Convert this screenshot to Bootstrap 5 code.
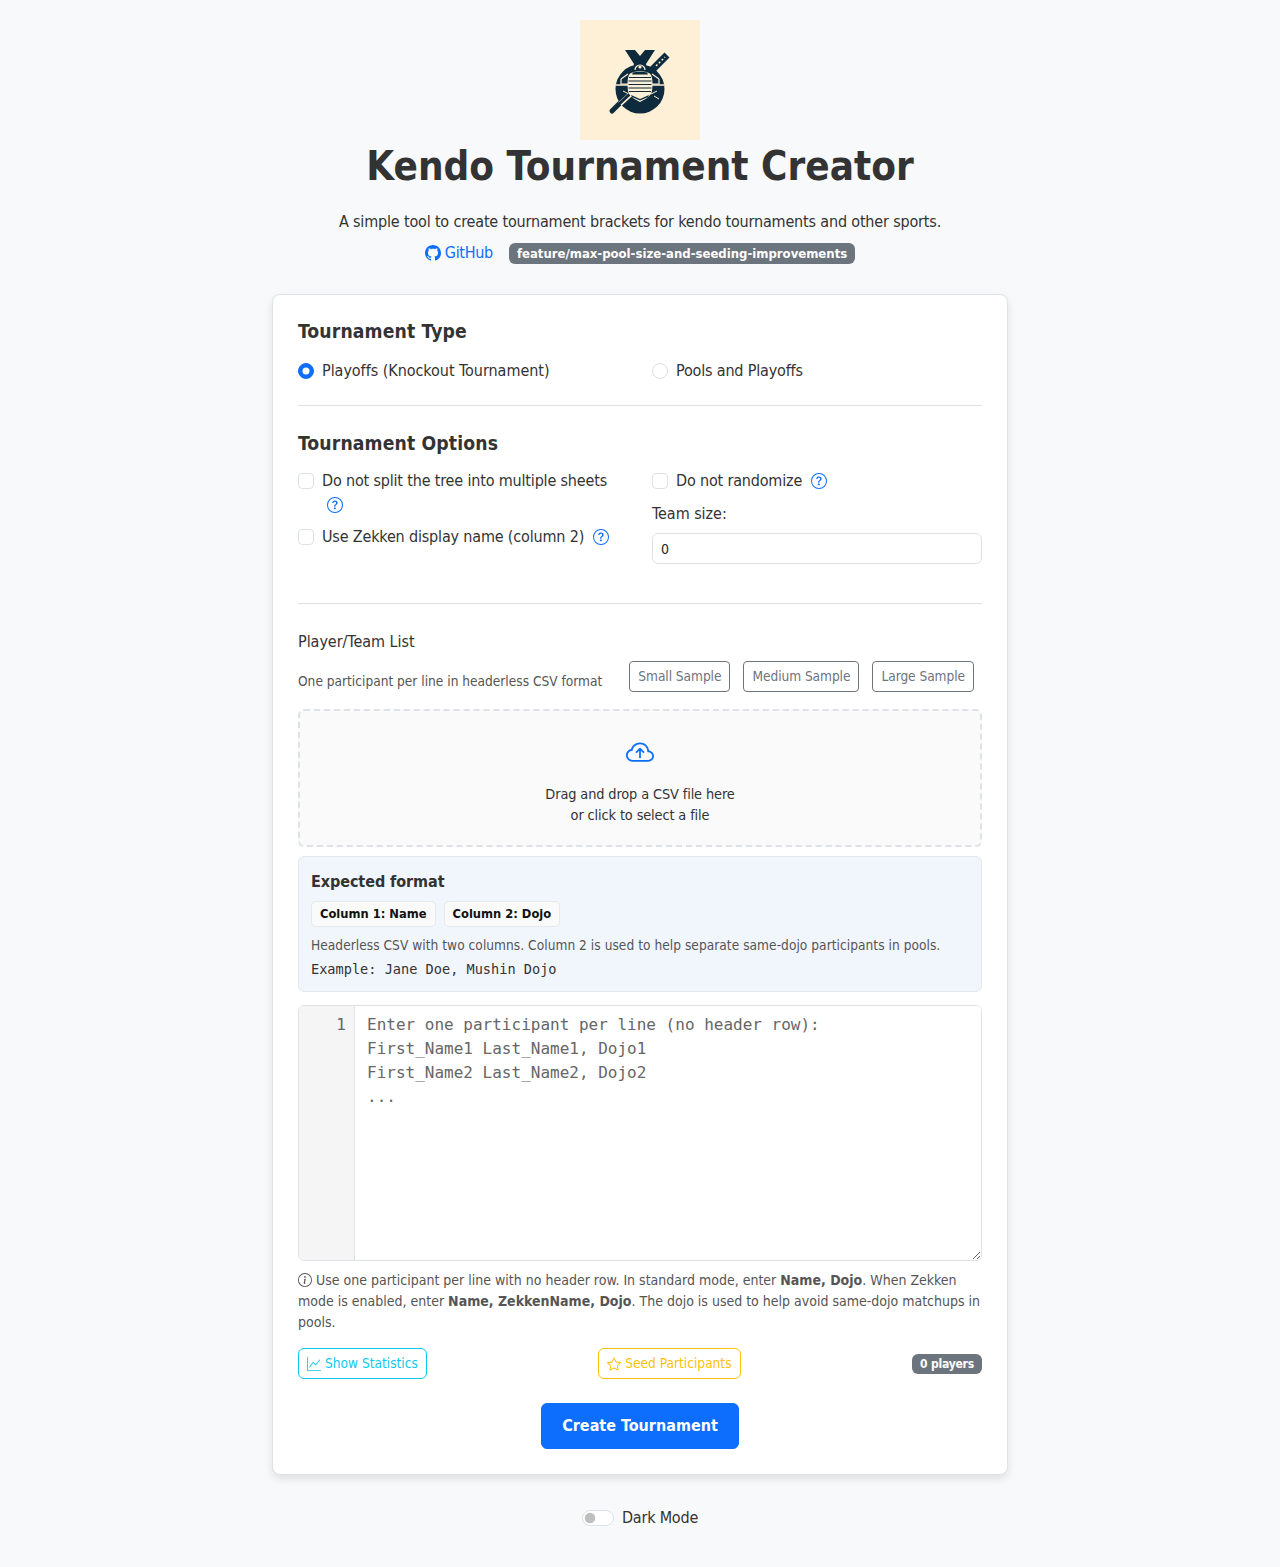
<!DOCTYPE html>
<html lang="en">
<head>
    <meta charset="UTF-8">
    <meta name="viewport" content="width=device-width, initial-scale=1.0">
    <title>Kendo Tournament Creator</title>
    <link href="https://cdn.jsdelivr.net/npm/bootstrap@5.3.0/dist/css/bootstrap.min.css" rel="stylesheet">
    <style>
        body { font-family: "DejaVu Sans Condensed", "DejaVu Sans", sans-serif; background-color: #f8f9fa; color: #333; }
        .ls-tight { letter-spacing: -.17px; }
        .ls-soft { letter-spacing: -.04px; }
        .page-wrap { width: 736px; margin: 0 auto; padding-top: 20px; }
        .logo-box { width: 120px; height: 120px; background: #fef0d6; display: block; margin: 0 auto; }
        .app-title { font-size: 40px; font-weight: 700; line-height: 48px; margin: 2px 0 20px; text-align: center; }
        .app-sub { text-align: center; line-height: 24px; margin-bottom: 6px; }
        .links-row { height: 26px; margin-bottom: 28px; }
        .git-link { text-decoration: none; color: #0d6efd; letter-spacing: -.3px; }
        .branch-tag { font-size: 13px; background: #6c757d; padding: 4px 8px; }
        .main-panel { background: #fff; border: 1px solid #dee2e6; border-radius: 8px; box-shadow: 0 4px 8px rgba(0,0,0,.1); padding: 25px; }
        .sec-title { font-size: 19.2px; font-weight: 700; line-height: 24px; margin-bottom: 15px; letter-spacing: .13px; }
        .options-title { margin-bottom: 13px; }
        .sep { margin: 22px 0 26px; border-color: #dee2e6; opacity: 1; }
        .sep-list { margin: 39px 0 26px; border-color: #dee2e6; opacity: 1; }
        .help-ic { color: #0d6efd; margin-left: 4px; vertical-align: -3px; }
        .wrap-ic { margin-left: 5px; }
        .team-label { margin-top: 1px; margin-bottom: 7px; }
        .team-input { height: 31px; font-size: 14px; padding: 4px 8px; }
        .list-title { line-height: 24px; margin-bottom: 7px; }
        .sample-hint { font-size: 13.6px; line-height: 21px; color: #555; }
        .sample-row { margin-bottom: 17px; }
        .sample-btn { font-size: 13.6px; height: 31px; letter-spacing: -.05px; }
        .drop-area { height: 138px; background: #fafafa; border: 2px dashed #dee2e6; border-radius: 6px; font-size: 14.4px; letter-spacing: -.12px; text-align: center; padding-top: 28px; line-height: 21px; }
        .drop-area svg { color: #0d6efd; display: block; margin: 0 auto 17px; }
        .format-box { background: #f1f6fd; border: 1px solid #e3e8ee; border-radius: 6px; padding: 13px 12px; height: 136px; margin-top: 9px; }
        .format-title { font-size: 16px; font-weight: 700; line-height: 24px; margin-bottom: 7px; letter-spacing: -.07px; }
        .col-chip { background: #fafafa; border: 1px solid #e6e8ea; border-radius: 5px; font-size: 12.8px; font-weight: 700; color: #111; padding: 4px 8px; line-height: 16px; }
        .format-note { font-size: 13.6px; color: #555; line-height: 20px; margin: 8px 0 4px; letter-spacing: .04px; }
        .format-eg { font-family: "DejaVu Sans Mono", monospace; font-size: 13.6px; color: #333; line-height: 20px; }
        .editor-box { height: 256px; margin-top: 13px; border: 1px solid #dee2e6; border-radius: 6px; overflow: hidden; }
        .line-gutter { width: 56px; background: #f5f5f5; border-right: 1px solid #dee2e6; text-align: right; padding: 7px 8px 0 0; font-family: "DejaVu Sans Mono", monospace; line-height: 24px; color: #666; }
        .list-input { font-family: "DejaVu Sans Mono", monospace; line-height: 24px; border: 0; padding: 7px 12px; flex: 1; outline: 0; resize: vertical; }
        .list-input::placeholder { color: #666; }
        .help-text { font-size: 14px; color: #555; line-height: 21px; margin: 9px 0 15px; }
        .help-text svg { vertical-align: -2px; }
        .tool-btn { font-size: 13.6px; height: 31px; padding: 4px 8px; }
        .count-tag { font-size: 12px; padding: 4px 8px; background: #6c757d; letter-spacing: -.2px; }
        .create-btn { width: 198px; height: 46px; font-weight: 700; margin: 24px auto 0; display: block; }
        .theme-row { margin-top: 31px; height: 24px; letter-spacing: -.2px; }
    </style>
</head>
<body>
    <div class="page-wrap">
        <svg class="logo-box" viewBox="0 0 120 120" role="img" aria-label="Kendo logo">
            <!-- sword behind the armour -->
            <path d="M32 91 52 71" stroke="#0e2a3d" stroke-width="5" stroke-linecap="round"/>
            <path d="M72 50 87 35" stroke="#0e2a3d" stroke-width="7"/>
            <path d="M76 46 85 37" stroke="#fef0d6" stroke-width="1.5" stroke-dasharray="2 2"/>
            <!-- round body -->
            <circle cx="60" cy="69" r="24.500" fill="#0e2a3d"/>
            <!-- helmet knot and horns -->
            <path d="M45 30h10l5 6 5-6h10l-9 14-1 5h-10l-1-5z" fill="#0e2a3d"/>
            <circle cx="60" cy="47" r="6.500" fill="#0e2a3d"/>
            <path d="M55 50a5 5 0 0 1 10 0" fill="none" stroke="#fef0d6" stroke-width="1.200"/>
            <circle cx="60" cy="47" r="1.600" fill="#fef0d6"/>
            <!-- shoulder and skirt lines -->
            <path d="M41 59l7-5M79 59l-7-5" stroke="#fef0d6" stroke-width="1.200"/>
            <path d="M41 59v5h7M79 59v5h-7" fill="none" stroke="#fef0d6" stroke-width="1.200"/>
            <path d="M36 65h13M71 65h13" stroke="#fef0d6" stroke-width="1.300"/>
            <path d="M43 71l6 3M77 71l-6 3M74 76l5 3" stroke="#fef0d6" stroke-width="1"/>
            <!-- handle runs over the disc -->
            <path d="M40 84 53 72" stroke="#fef0d6" stroke-width="5"/>
            <path d="M38 85 52 72" stroke="#0e2a3d" stroke-width="3"/>
            <!-- breast plate -->
            <path d="M49 55c3-5 19-5 22 0 2 3 2 15 0 19-2 3-7 6-11 8-4-2-9-5-11-8-2-4-2-16 0-19z" fill="#fef0d6"/>
            <path d="M49 57.500h22M48.500 61h23M48.500 64.500h23M48.500 68h23M49 71.500h22" stroke="#0e2a3d" stroke-width="1"/>
            <path d="M53 52.500c2-1 12-1 14 0l1 2h-16z" fill="#0e2a3d"/>
            <path d="M51 75l9 4 9-4-1 2-8 3.500-8-3.500z" fill="#0e2a3d"/>
        </svg>
        <h1 class="app-title">Kendo Tournament Creator</h1>
        <p class="app-sub ls-tight">A simple tool to create tournament brackets for kendo tournaments and other sports.</p>
        <div class="links-row d-flex justify-content-center align-items-center gap-3">
            <a href="#" class="git-link d-inline-flex align-items-center gap-1">
                <svg width="16" height="16" viewBox="0 0 16 16" fill="currentColor"><path d="M8 0C3.58 0 0 3.58 0 8c0 3.54 2.29 6.53 5.47 7.59.4.07.55-.17.55-.38 0-.19-.01-.82-.01-1.49-2.01.37-2.53-.49-2.69-.94-.09-.23-.48-.94-.82-1.13-.28-.15-.68-.52-.01-.53.63-.01 1.08.58 1.23.82.72 1.21 1.87.87 2.33.66.07-.52.28-.87.51-1.07-1.78-.2-3.64-.89-3.64-3.95 0-.87.31-1.59.82-2.15-.08-.2-.36-1.02.08-2.12 0 0 .67-.21 2.2.82.64-.18 1.32-.27 2-.27.68 0 1.36.09 2 .27 1.53-1.04 2.2-.82 2.2-.82.44 1.1.16 1.92.08 2.12.51.56.82 1.27.82 2.15 0 3.07-1.87 3.75-3.65 3.95.29.25.54.73.54 1.48 0 1.07-.01 1.93-.01 2.2 0 .21.15.46.55.38A8.012 8.012 0 0 0 16 8c0-4.42-3.58-8-8-8z"/></svg>
                GitHub
            </a>
            <span class="badge branch-tag">feature/max-pool-size-and-seeding-improvements</span>
        </div>

        <div class="main-panel">
            <div class="sec-title">Tournament Type</div>
            <div class="row">
                <div class="col-6">
                    <div class="form-check mb-0">
                        <input class="form-check-input" type="radio" name="ttype" id="t1" checked>
                        <label class="form-check-label ls-soft" for="t1">Playoffs (Knockout Tournament)</label>
                    </div>
                </div>
                <div class="col-6">
                    <div class="form-check mb-0">
                        <input class="form-check-input" type="radio" name="ttype" id="t2">
                        <label class="form-check-label ls-tight" for="t2">Pools and Playoffs</label>
                    </div>
                </div>
            </div>
            <hr class="sep">
            <div class="sec-title options-title">Tournament Options</div>
            <div class="row">
                <div class="col-6">
                    <div class="form-check mb-2">
                        <input class="form-check-input" type="checkbox" id="o1">
                        <label class="form-check-label ls-tight" for="o1">Do not split the tree into multiple sheets
                            <svg class="help-ic wrap-ic" width="16" height="16" viewBox="0 0 16 16" fill="currentColor"><path d="M8 15A7 7 0 1 1 8 1a7 7 0 0 1 0 14zm0 1A8 8 0 1 0 8 0a8 8 0 0 0 0 16z"/><path d="M5.255 5.786a.237.237 0 0 0 .241.247h.825c.138 0 .248-.113.266-.25.09-.656.54-1.134 1.342-1.134.686 0 1.314.343 1.314 1.168 0 .635-.374.927-.965 1.371-.673.489-1.206 1.06-1.168 1.987l.003.217a.25.25 0 0 0 .25.246h.811a.25.25 0 0 0 .25-.25v-.105c0-.718.273-.927 1.01-1.486.609-.463 1.244-.977 1.244-2.056 0-1.511-1.276-2.241-2.673-2.241-1.267 0-2.655.59-2.75 2.286zm1.557 5.763c0 .533.425.927 1.01.927.609 0 1.028-.394 1.028-.927 0-.552-.42-.94-1.029-.94-.584 0-1.009.388-1.009.94z"/></svg>
                        </label>
                    </div>
                    <div class="form-check mb-0">
                        <input class="form-check-input" type="checkbox" id="o2">
                        <label class="form-check-label ls-tight" for="o2">Use Zekken display name (column 2)
                            <svg class="help-ic" width="16" height="16" viewBox="0 0 16 16" fill="currentColor"><path d="M8 15A7 7 0 1 1 8 1a7 7 0 0 1 0 14zm0 1A8 8 0 1 0 8 0a8 8 0 0 0 0 16z"/><path d="M5.255 5.786a.237.237 0 0 0 .241.247h.825c.138 0 .248-.113.266-.25.09-.656.54-1.134 1.342-1.134.686 0 1.314.343 1.314 1.168 0 .635-.374.927-.965 1.371-.673.489-1.206 1.06-1.168 1.987l.003.217a.25.25 0 0 0 .25.246h.811a.25.25 0 0 0 .25-.25v-.105c0-.718.273-.927 1.01-1.486.609-.463 1.244-.977 1.244-2.056 0-1.511-1.276-2.241-2.673-2.241-1.267 0-2.655.59-2.75 2.286zm1.557 5.763c0 .533.425.927 1.01.927.609 0 1.028-.394 1.028-.927 0-.552-.42-.94-1.029-.94-.584 0-1.009.388-1.009.94z"/></svg>
                        </label>
                    </div>
                </div>
                <div class="col-6">
                    <div class="form-check mb-2">
                        <input class="form-check-input" type="checkbox" id="o3">
                        <label class="form-check-label ls-tight" for="o3">Do not randomize
                            <svg class="help-ic" width="16" height="16" viewBox="0 0 16 16" fill="currentColor"><path d="M8 15A7 7 0 1 1 8 1a7 7 0 0 1 0 14zm0 1A8 8 0 1 0 8 0a8 8 0 0 0 0 16z"/><path d="M5.255 5.786a.237.237 0 0 0 .241.247h.825c.138 0 .248-.113.266-.25.09-.656.54-1.134 1.342-1.134.686 0 1.314.343 1.314 1.168 0 .635-.374.927-.965 1.371-.673.489-1.206 1.06-1.168 1.987l.003.217a.25.25 0 0 0 .25.246h.811a.25.25 0 0 0 .25-.25v-.105c0-.718.273-.927 1.01-1.486.609-.463 1.244-.977 1.244-2.056 0-1.511-1.276-2.241-2.673-2.241-1.267 0-2.655.59-2.75 2.286zm1.557 5.763c0 .533.425.927 1.01.927.609 0 1.028-.394 1.028-.927 0-.552-.42-.94-1.029-.94-.584 0-1.009.388-1.009.94z"/></svg>
                        </label>
                    </div>
                    <label class="form-label ls-soft team-label" for="teamsize">Team size:</label>
                    <input class="form-control team-input" type="number" id="teamsize" value="0">
                </div>
            </div>
            <hr class="sep-list">
            <div class="list-title ls-soft">Player/Team List</div>
            <div class="sample-row d-flex justify-content-between align-items-end pe-2">
                <span class="sample-hint">One participant per line in headerless CSV format</span>
                <div class="d-flex" style="gap:13px">
                    <button type="button" class="btn btn-outline-secondary btn-sm sample-btn">Small Sample</button>
                    <button type="button" class="btn btn-outline-secondary btn-sm sample-btn">Medium Sample</button>
                    <button type="button" class="btn btn-outline-secondary btn-sm sample-btn">Large Sample</button>
                </div>
            </div>
            <div class="drop-area">
                <svg width="28" height="28" viewBox="0 0 16 16" fill="currentColor"><path d="M7.646 5.146a.5.5 0 0 1 .708 0l2 2a.5.5 0 0 1-.708.708L8.500 6.707V10.500a.5.5 0 0 1-1 0V6.707L6.354 7.854a.5.5 0 1 1-.708-.708l2-2z"/><path d="M4.406 3.342A5.53 5.53 0 0 1 8 2c2.690 0 4.923 2 5.166 4.579C14.758 6.804 16 8.137 16 9.773 16 11.569 14.502 13 12.687 13H3.781C1.708 13 0 11.366 0 9.318c0-1.763 1.266-3.223 2.942-3.593.143-.863.698-1.723 1.464-2.383zm.653.757c-.757.653-1.153 1.440-1.153 2.056v.448l-.445.049C2.064 6.805 1 7.952 1 9.318 1 10.785 2.230 12 3.781 12h8.906C13.980 12 15 10.988 15 9.773c0-1.216-1.020-2.228-2.313-2.228h-.5v-.5C12.188 4.825 10.328 3 8 3a4.530 4.530 0 0 0-2.941 1.100z"/></svg>
                Drag and drop a CSV file here<br>or click to select a file
            </div>
            <div class="format-box">
                <div class="format-title">Expected format</div>
                <div class="d-flex gap-2">
                    <span class="col-chip">Column 1: Name</span>
                    <span class="col-chip">Column 2: Dojo</span>
                </div>
                <div class="format-note">Headerless CSV with two columns. Column 2 is used to help separate same-dojo participants in pools.</div>
                <div class="format-eg">Example: Jane Doe, Mushin Dojo</div>
            </div>
            <div class="editor-box d-flex">
                <div class="line-gutter">1</div>
                <textarea class="list-input" placeholder="Enter one participant per line (no header row):&#10;First_Name1 Last_Name1, Dojo1&#10;First_Name2 Last_Name2, Dojo2&#10;..."></textarea>
            </div>
            <div class="help-text">
                <svg width="14" height="14" viewBox="0 0 16 16" fill="currentColor"><path d="M8 15A7 7 0 1 1 8 1a7 7 0 0 1 0 14zm0 1A8 8 0 1 0 8 0a8 8 0 0 0 0 16z"/><path d="m8.930 6.588-2.290.287-.082.380.450.083c.294.070.352.176.288.469l-.738 3.468c-.194.897.105 1.319.808 1.319.545 0 1.178-.252 1.465-.598l.088-.416c-.2.176-.492.246-.686.246-.275 0-.375-.193-.304-.533L8.930 6.588zM9 4.500a1 1 0 1 1-2 0 1 1 0 0 1 2 0z"/></svg>
                Use one participant per line with no header row. In standard mode, enter <strong>Name, Dojo</strong>. When Zekken mode is enabled, enter <strong>Name, ZekkenName, Dojo</strong>. The dojo is used to help avoid same-dojo matchups in pools.
            </div>
            <div class="d-flex justify-content-between align-items-center">
                <button type="button" class="btn btn-outline-info tool-btn d-inline-flex align-items-center gap-1">
                    <svg width="14" height="14" viewBox="0 0 16 16" fill="currentColor"><path d="M0 0h1v15h15v1H0V0Zm14.817 3.113a.5.5 0 0 1 .07.704l-4.5 5.500a.5.5 0 0 1-.74.037L7.060 6.767l-3.656 5.027a.5.5 0 0 1-.808-.588l4-5.500a.5.5 0 0 1 .758-.06l2.609 2.610 4.150-5.073a.5.5 0 0 1 .704-.07Z"/></svg>
                    Show Statistics
                </button>
                <button type="button" class="btn btn-outline-warning tool-btn d-inline-flex align-items-center gap-1">
                    <svg width="14" height="14" viewBox="0 0 16 16" fill="currentColor"><path d="M2.866 14.850c-.078.444.360.791.746.593l4.390-2.256 4.389 2.256c.386.198.824-.149.746-.592l-.830-4.730 3.522-3.356c.330-.314.160-.888-.282-.950l-4.898-.696L8.465.792a.513.513 0 0 0-.927 0L5.354 5.120l-4.898.696c-.441.062-.612.636-.283.950l3.523 3.356-.830 4.730zm4.905-2.767-3.686 1.894.694-3.957a.565.565 0 0 0-.163-.505L1.710 6.745l4.052-.576a.525.525 0 0 0 .393-.288L8 2.223l1.847 3.658a.525.525 0 0 0 .393.288l4.052.575-2.906 2.770a.565.565 0 0 0-.163.506l.694 3.957-3.686-1.894a.503.503 0 0 0-.461 0z"/></svg>
                    Seed Participants
                </button>
                <span class="badge count-tag">0 players</span>
            </div>
            <button type="button" class="btn btn-primary create-btn">Create Tournament</button>
        </div>

        <div class="theme-row d-flex justify-content-center">
            <div class="form-check form-switch mb-0">
                <input class="form-check-input" type="checkbox" id="darkMode">
                <label class="form-check-label" for="darkMode">Dark Mode</label>
            </div>
        </div>
    </div>
    <script src="https://cdn.jsdelivr.net/npm/bootstrap@5.3.0/dist/js/bootstrap.bundle.min.js"></script>
</body>
</html>
